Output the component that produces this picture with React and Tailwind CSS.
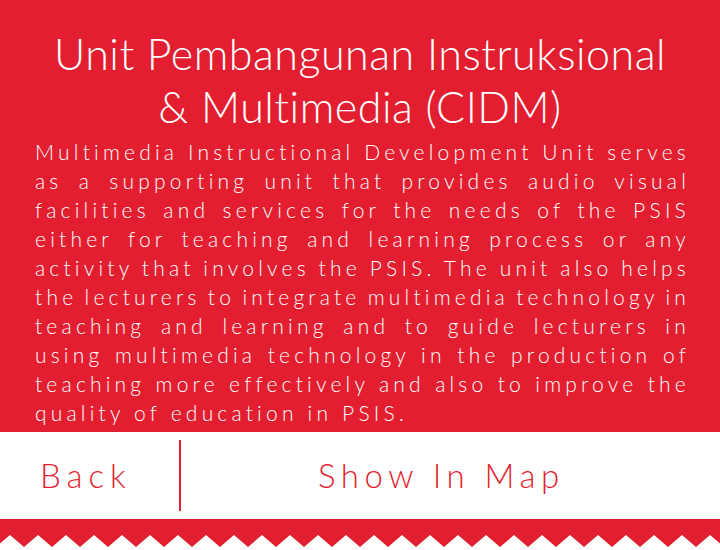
import React from 'react'

const lines = [
  'Multimedia Instructional Development Unit serves',
  'as a supporting unit that provides audio visual',
  'facilities and services for the needs of the PSIS',
  'either for teaching and learning process or any',
  'activity that involves the PSIS. The unit also helps',
  'the lecturers to integrate multimedia technology in',
  'teaching and learning and to guide lecturers in',
  'using multimedia technology in the production of',
  'teaching  more effectively and also to improve the',
  'quality of education in PSIS.',
]

// zigzag edge: white peaks every 28px, red tips between them
function Zigzag() {
  const pts = ['0,0']
  for (let x = -4; x <= 740; x += 28) {
    pts.push(`${x},12`)
    pts.push(`${x + 14},0`)
  }
  pts.push('740,0')
  return (
    <svg width="720" height="15" viewBox="0 0 720 15" className="block">
      <polygon points={pts.join(' ')} fill="#e21e30" />
    </svg>
  )
}

export default function App() {
  return (
    <div className="w-[720px] h-[550px] bg-white overflow-hidden font-['Lato',sans-serif] font-light">
      {/* Header and description */}
      <div className="h-[432px] bg-[#e21e30] text-white pt-[27px]">
        <h1 className="text-center text-[43px] leading-[53px] tracking-[0.5px] font-light">
          Unit Pembangunan Instruksional
          <br />
          &amp; Multimedia (CIDM)
        </h1>
        <div className="mt-[4px] pl-[35px] pr-[30px] text-[21px] leading-[29px] tracking-[4.2px]">
          {lines.map((l, i) => (
            <div
              key={i}
              className={i < 9 ? 'whitespace-nowrap text-justify [text-align-last:justify] [word-spacing:-10px]' : ''}
            >
              {l}
            </div>
          ))}
        </div>
      </div>

      {/* Buttons */}
      <div className="h-[87px] flex items-center text-[#e21e30]">
        <div className="w-[179px] pl-[40px] text-[33px] tracking-[6px]">Back</div>
        <div className="w-[2px] h-[71px] bg-[#e21e30]" />
        <div className="pl-[137px] text-[33px] tracking-[5.5px]">Show In Map</div>
      </div>

      {/* Bottom edge */}
      <div className="h-[16px] bg-[#e21e30]" />
      <Zigzag />
    </div>
  )
}
